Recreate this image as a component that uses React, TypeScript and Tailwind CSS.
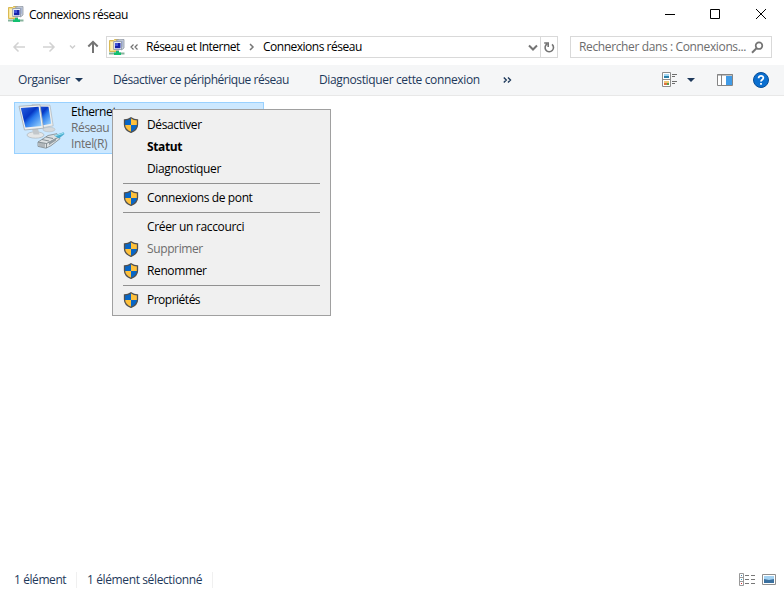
import type { ReactNode } from "react";

function NetworkFolderIcon() {
  return (
    <svg width="16" height="17" viewBox="0 0 16 17" className="shrink-0">
      <path d="M.5 1.500h4l1-1h4v12h-9z" fill="#f6dd82" stroke="#d9b955" />
      <path d="M1.500 3h3v8.500h-3z" fill="#fdf0b8" />
      <path d="M7.500.800l7.500-.3v8.500l-2.500 2z" fill="#c9d0da" stroke="#9098a4" strokeWidth=".8" />
      <path d="M9 1.800h5v6H9z" fill="#a9b6d6" />
      <path d="M4.700 2.500h7.800v8H4.700z" fill="#e9edf5" stroke="#8a94a8" strokeWidth=".8" />
      <path d="M6 4h5.500v5.200H6z" fill="#1722a8" />
      <path d="M6 4h3v3H6z" fill="#4355d8" />
      <path d="M7 11h3v2H7z" fill="#b3b8c0" />
      <path d="M0 14.500h15.500" stroke="#86b39c" strokeWidth="2" />
      <path d="M7 12h3v1.500h2v2.500H5v-2.500h2z" fill="#13c070" />
    </svg>
  );
}

function ShieldIcon() {
  return (
    <svg width="16" height="16" viewBox="0 0 16 16">
      <path d="M8 .7C6 2.100 3.800 2.800 1.500 2.900v4.600c0 3.800 3 6.500 6.500 7.800 3.500-1.300 6.500-4 6.500-7.800V2.900C12.200 2.800 10 2.100 8 .7z" fill="#ffc13b" />
      <path d="M8 .7C6 2.100 3.800 2.800 1.500 2.900V8H8zM8 8h6.500c-.2 3.600-3.200 6-6.500 7.300z" fill="#0866c6" />
      <path d="M8 .7C6 2.100 3.800 2.800 1.500 2.900v4.600c0 3.800 3 6.500 6.500 7.800 3.500-1.300 6.500-4 6.500-7.800V2.900C12.200 2.800 10 2.100 8 .7z" fill="none" stroke="#505050" strokeWidth="1.300" />
    </svg>
  );
}

function EthernetIcon() {
  return (
    <svg width="48" height="48" viewBox="0 0 48 48" className="shrink-0">
      <defs>
        <linearGradient id="screen" x1="0" y1="0" x2="1" y2="1">
          <stop offset="0" stopColor="#2a62e0" />
          <stop offset=".4" stopColor="#0636c4" />
          <stop offset=".55" stopColor="#2878ec" />
          <stop offset="1" stopColor="#a4dcff" />
        </linearGradient>
      </defs>
      <ellipse cx="31" cy="25.500" rx="6" ry="2.300" fill="#d5d9dc" stroke="#b1b7bb" strokeWidth=".5" />
      <path d="M14 .8L32 1.200l3.200 20.600-9.500 1.700z" fill="#eceeee" stroke="#aeb5ba" strokeWidth=".7" />
      <path d="M17 2.500l13.500.3 2.700 17-8 1.400z" fill="url(#screen)" />
      <ellipse cx="17.500" cy="31" rx="8.500" ry="3.200" fill="#e4e6e7" stroke="#a6adb2" strokeWidth=".6" />
      <path d="M14 25l6-.5 1.500 6h-6z" fill="#c2c7cb" />
      <path d="M1 2.300L22 .9l3.500 23.300L6.500 26z" fill="#f0f1f1" stroke="#a3a9ad" strokeWidth=".8" />
      <path d="M2.800 4L20.600 2.800l2.900 19.200L7.500 23.500z" fill="url(#screen)" />
      <path d="M20 38l10-6.500 9-1.800 3 5-9 7-5 2.500-8-1.800z" fill="#dce0e2" stroke="#7c868c" strokeWidth=".8" />
      <path d="M20 38l8.500 1.500L41 33M28.500 39.500v4.500M22 38.500v4M24 39v4M26 39.300v4M24 35.500l7 1.500M28 33l7 1.500" fill="none" stroke="#6f7a80" strokeWidth=".8" />
      <path d="M31 38l7-4v2.500L31 41z" fill="#929ca2" />
      <path d="M36 31.500l9.500-3.200 1 1.700-5.500 4.500z" fill="#4badcf" />
      <path d="M37 31.800l8.500-2.500" stroke="#a0e4f4" />
    </svg>
  );
}

function TitleBar() {
  return (
    <header className="flex h-[29px] items-center bg-white pl-2">
      <NetworkFolderIcon />
      <span className="ml-[5px] tracking-[-0.49px] text-black">Connexions réseau</span>
      <svg width="119" height="29" viewBox="0 0 119 29" className="ml-auto" fill="none" stroke="#000">
        <path d="M0 14.500h10M45.500 9.500h9v9h-9z" />
        <path d="M91 9l10 10M101 9L91 19" />
      </svg>
    </header>
  );
}

function AddressRow() {
  return (
    <div className="flex h-9 items-start bg-white pt-[7px]">
      <svg width="106" height="22" viewBox="0 0 106 22" fill="none" strokeWidth="1.500" className="shrink-0">
        <path d="M25 11H14M18.500 6.500L14 11l4.500 4.500M43 11h11M49.500 6.500L54 11l-4.500 4.500" stroke="#d2d2d2" />
        <path d="M70 9.500l2.500 2.500L75 9.500" stroke="#cecece" />
        <path d="M93 17V6M88.300 10.500L93 5.800l4.700 4.700" stroke="#747474" strokeWidth="2" />
      </svg>
      <div className="flex h-[22px] w-[452px] shrink-0 items-center border border-[#d9d9d9] pl-[2px]">
        <NetworkFolderIcon />
        <svg width="8" height="8" viewBox="0 0 8 8" fill="none" stroke="#6f6f6f" strokeWidth="1.200" className="ml-[5px]">
          <path d="M3.500 1.500L1 4l2.500 2.500M7.500 1.500L5 4l2.500 2.500" />
        </svg>
        <span className="ml-2 w-[94px] tracking-[-0.5px]">Réseau et Internet</span>
        <svg width="6" height="8" viewBox="0 0 6 8" fill="none" stroke="#777" strokeWidth="1.500" className="ml-[9px]">
          <path d="M1 1l3 3-3 3" />
        </svg>
        <span className="ml-2 tracking-[-0.49px]">Connexions réseau</span>
        <svg width="10" height="8" viewBox="0 0 10 8" fill="none" stroke="#747474" strokeWidth="2" className="mr-[2px] ml-auto">
          <path d="M1 2.500l4 4 4-4" />
        </svg>
        <span className="flex h-5 w-[17px] items-center justify-center border-l border-[#d9d9d9]">
          <svg width="12" height="14" viewBox="0 0 12 14" fill="none" stroke="#747474" strokeWidth="1.600">
            <path d="M9 4.300A4.200 4.200 0 1 1 4 4M1.200 3h4v4" />
          </svg>
        </span>
      </div>
      <div className="ml-3 flex h-[22px] w-[202px] items-center border border-[#d9d9d9] pl-2 text-[#6d6d6d]">
        <span className="tracking-[-0.37px]">Rechercher dans : Connexions...</span>
        <svg width="13" height="13" viewBox="0 0 13 13" fill="none" stroke="#747474" className="mr-[7px] ml-auto">
          <circle cx="8" cy="4.700" r="3.300" strokeWidth="1.700" />
          <path d="M5.500 7.200L1 11.700" strokeWidth="2" />
        </svg>
      </div>
    </div>
  );
}

function Toolbar() {
  return (
    <nav className="flex h-[31px] items-center border-b border-[#e8e8e8] bg-[#f5f6f7] pl-[18px] text-[#1e395b]">
      <span className="w-[51px] tracking-[-0.38px]">Organiser</span>
      <svg width="8" height="4" viewBox="0 0 8 4" className="ml-[6px]" fill="#1e395b"><path d="M0 0h8L4 4z" /></svg>
      <span className="ml-[30px] w-[176px] tracking-[-0.47px]">Désactiver ce périphérique réseau</span>
      <span className="ml-[30px] w-[161px] tracking-[-0.36px]">Diagnostiquer cette connexion</span>
      <svg width="9" height="6" viewBox="0 0 9 6" className="ml-[23px]" fill="none" stroke="#1e395b" strokeWidth="1.400">
        <path d="M.8.500L3.300 3 .8 5.500M5 .5L7.500 3 5 5.500" />
      </svg>
      <svg width="16" height="16" viewBox="0 0 16 16" className="ml-auto">
        <path d="M.5.500h8v14h-8zM.5 7.500h8" fill="#fff" stroke="#8c8c8c" />
        <path d="M2 2h5v2H2z" fill="#a4d8f4" /><path d="M2 4h5v2H2z" fill="#287fa9" />
        <path d="M2 9h5v2H2z" fill="#f0c878" /><path d="M2 11h3v2H2z" fill="#dd7040" /><path d="M5 11h2v2H5z" fill="#58a044" />
        <path d="M10 2.500h5M10 4.500h3M10 9.500h5M10 11.500h3" stroke="#6d6d6d" />
      </svg>
      <svg width="8" height="4" viewBox="0 0 8 4" className="ml-[9px]" fill="#1e395b"><path d="M0 0h8L4 4z" /></svg>
      <svg width="16" height="12" viewBox="0 0 16 12" className="ml-[22px]">
        <path d="M.5.500h15v11H.5z" fill="#fff" stroke="#858585" />
        <path d="M0 1h16M4.500 1v11" stroke="#858585" />
        <path d="M9 2h6v9H9z" fill="#409be7" />
      </svg>
      <svg width="16" height="16" viewBox="0 0 16 16" className="mr-[15px] ml-5">
        <circle cx="8" cy="8" r="7.500" fill="#0a6fd0" stroke="#084d96" />
        <path d="M5.600 6.200c0-3.200 5-3 4.700-.2C10.200 7.700 8 7.700 8 9.500M8 11v1.700" fill="none" stroke="#fff" strokeWidth="1.800" />
      </svg>
    </nav>
  );
}

function MenuItem({ children, shield }: { children: ReactNode; shield?: boolean }) {
  return (
    <li className="flex h-[22px] items-center tracking-[-0.38px]">
      <span className="mr-2 ml-[10px] w-4">{shield && <ShieldIcon />}</span>
      {children}
    </li>
  );
}

function Separator() {
  return <li className="mx-[10px] my-[3px] h-px bg-[#919191]" />;
}

function ContextMenu() {
  return (
    <ul className="absolute top-[13px] left-[112px] w-[219px] border border-[#a0a0a0] bg-[#f0f0f0] py-1 text-black">
      <MenuItem shield>Désactiver</MenuItem>
      <MenuItem><span className="font-bold">Statut</span></MenuItem>
      <MenuItem>Diagnostiquer</MenuItem>
      <Separator />
      <MenuItem shield>Connexions de pont</MenuItem>
      <Separator />
      <MenuItem><span className="tracking-[-0.33px]">Créer un raccourci</span></MenuItem>
      <MenuItem shield><span className="text-[#6d6d6d]">Supprimer</span></MenuItem>
      <MenuItem shield>Renommer</MenuItem>
      <Separator />
      <MenuItem shield><span className="tracking-[-0.5px]">Propriétés</span></MenuItem>
    </ul>
  );
}

export default function App() {
  return (
    <div className="flex h-[591px] w-[784px] flex-col overflow-hidden bg-white font-['Open_Sans','Noto_Sans',sans-serif] text-[12px] leading-4 whitespace-nowrap text-black">
      <TitleBar />
      <AddressRow />
      <Toolbar />
      <main className="relative flex-1 pt-[6px] pl-[14px]">
        <div className="flex h-[52px] w-[250px] border border-[#99d1ff] bg-[#cce8ff] pt-px pl-[3px]">
          <EthernetIcon />
          <div className="ml-[5px] tracking-[-0.38px]">
            <p>Ethernet</p>
            <p className="text-[#6d6d6d]">Réseau</p>
            <p className="text-[#6d6d6d]">Intel(R)</p>
          </div>
        </div>
        <ContextMenu />
      </main>
      <footer className="flex h-[23px] items-center pl-[14px] text-[#1e395b]">
        <span className="w-[63px] border-r border-[#f0f0f0] tracking-[-0.42px]">1 élément</span>
        <span className="w-[136px] border-r border-[#f0f0f0] pl-[10px] tracking-[-0.38px]">1 élément sélectionné</span>
        <svg width="17" height="13" viewBox="0 0 17 13" className="ml-auto">
          <path d="M.5.500h4v12h-4zM.5 4.500h4M.5 8.500h4" fill="#fff" stroke="#999" />
          <path d="M2 2h1v1H2z" fill="#4c86ab" /><path d="M2 6h1v1H2z" fill="#32a4ca" /><path d="M2 10h1v1H2z" fill="#d42d2d" />
          <path d="M6 2.500h4M12 2.500h4M6 6.500h4M12 6.500h4M6 10.500h4M12 10.500h4" stroke="#777" />
        </svg>
        <svg width="14" height="11" viewBox="0 0 14 11" className="mr-2 ml-[6px]">
          <path d="M.5.500h13v10H.5z" fill="#fff" stroke="#8f8f8f" />
          <path d="M2 2h10v4H2z" fill="#a4d2f2" /><path d="M2 5l5 1 5-1v4H2z" fill="#3a709f" />
        </svg>
      </footer>
    </div>
  );
}
